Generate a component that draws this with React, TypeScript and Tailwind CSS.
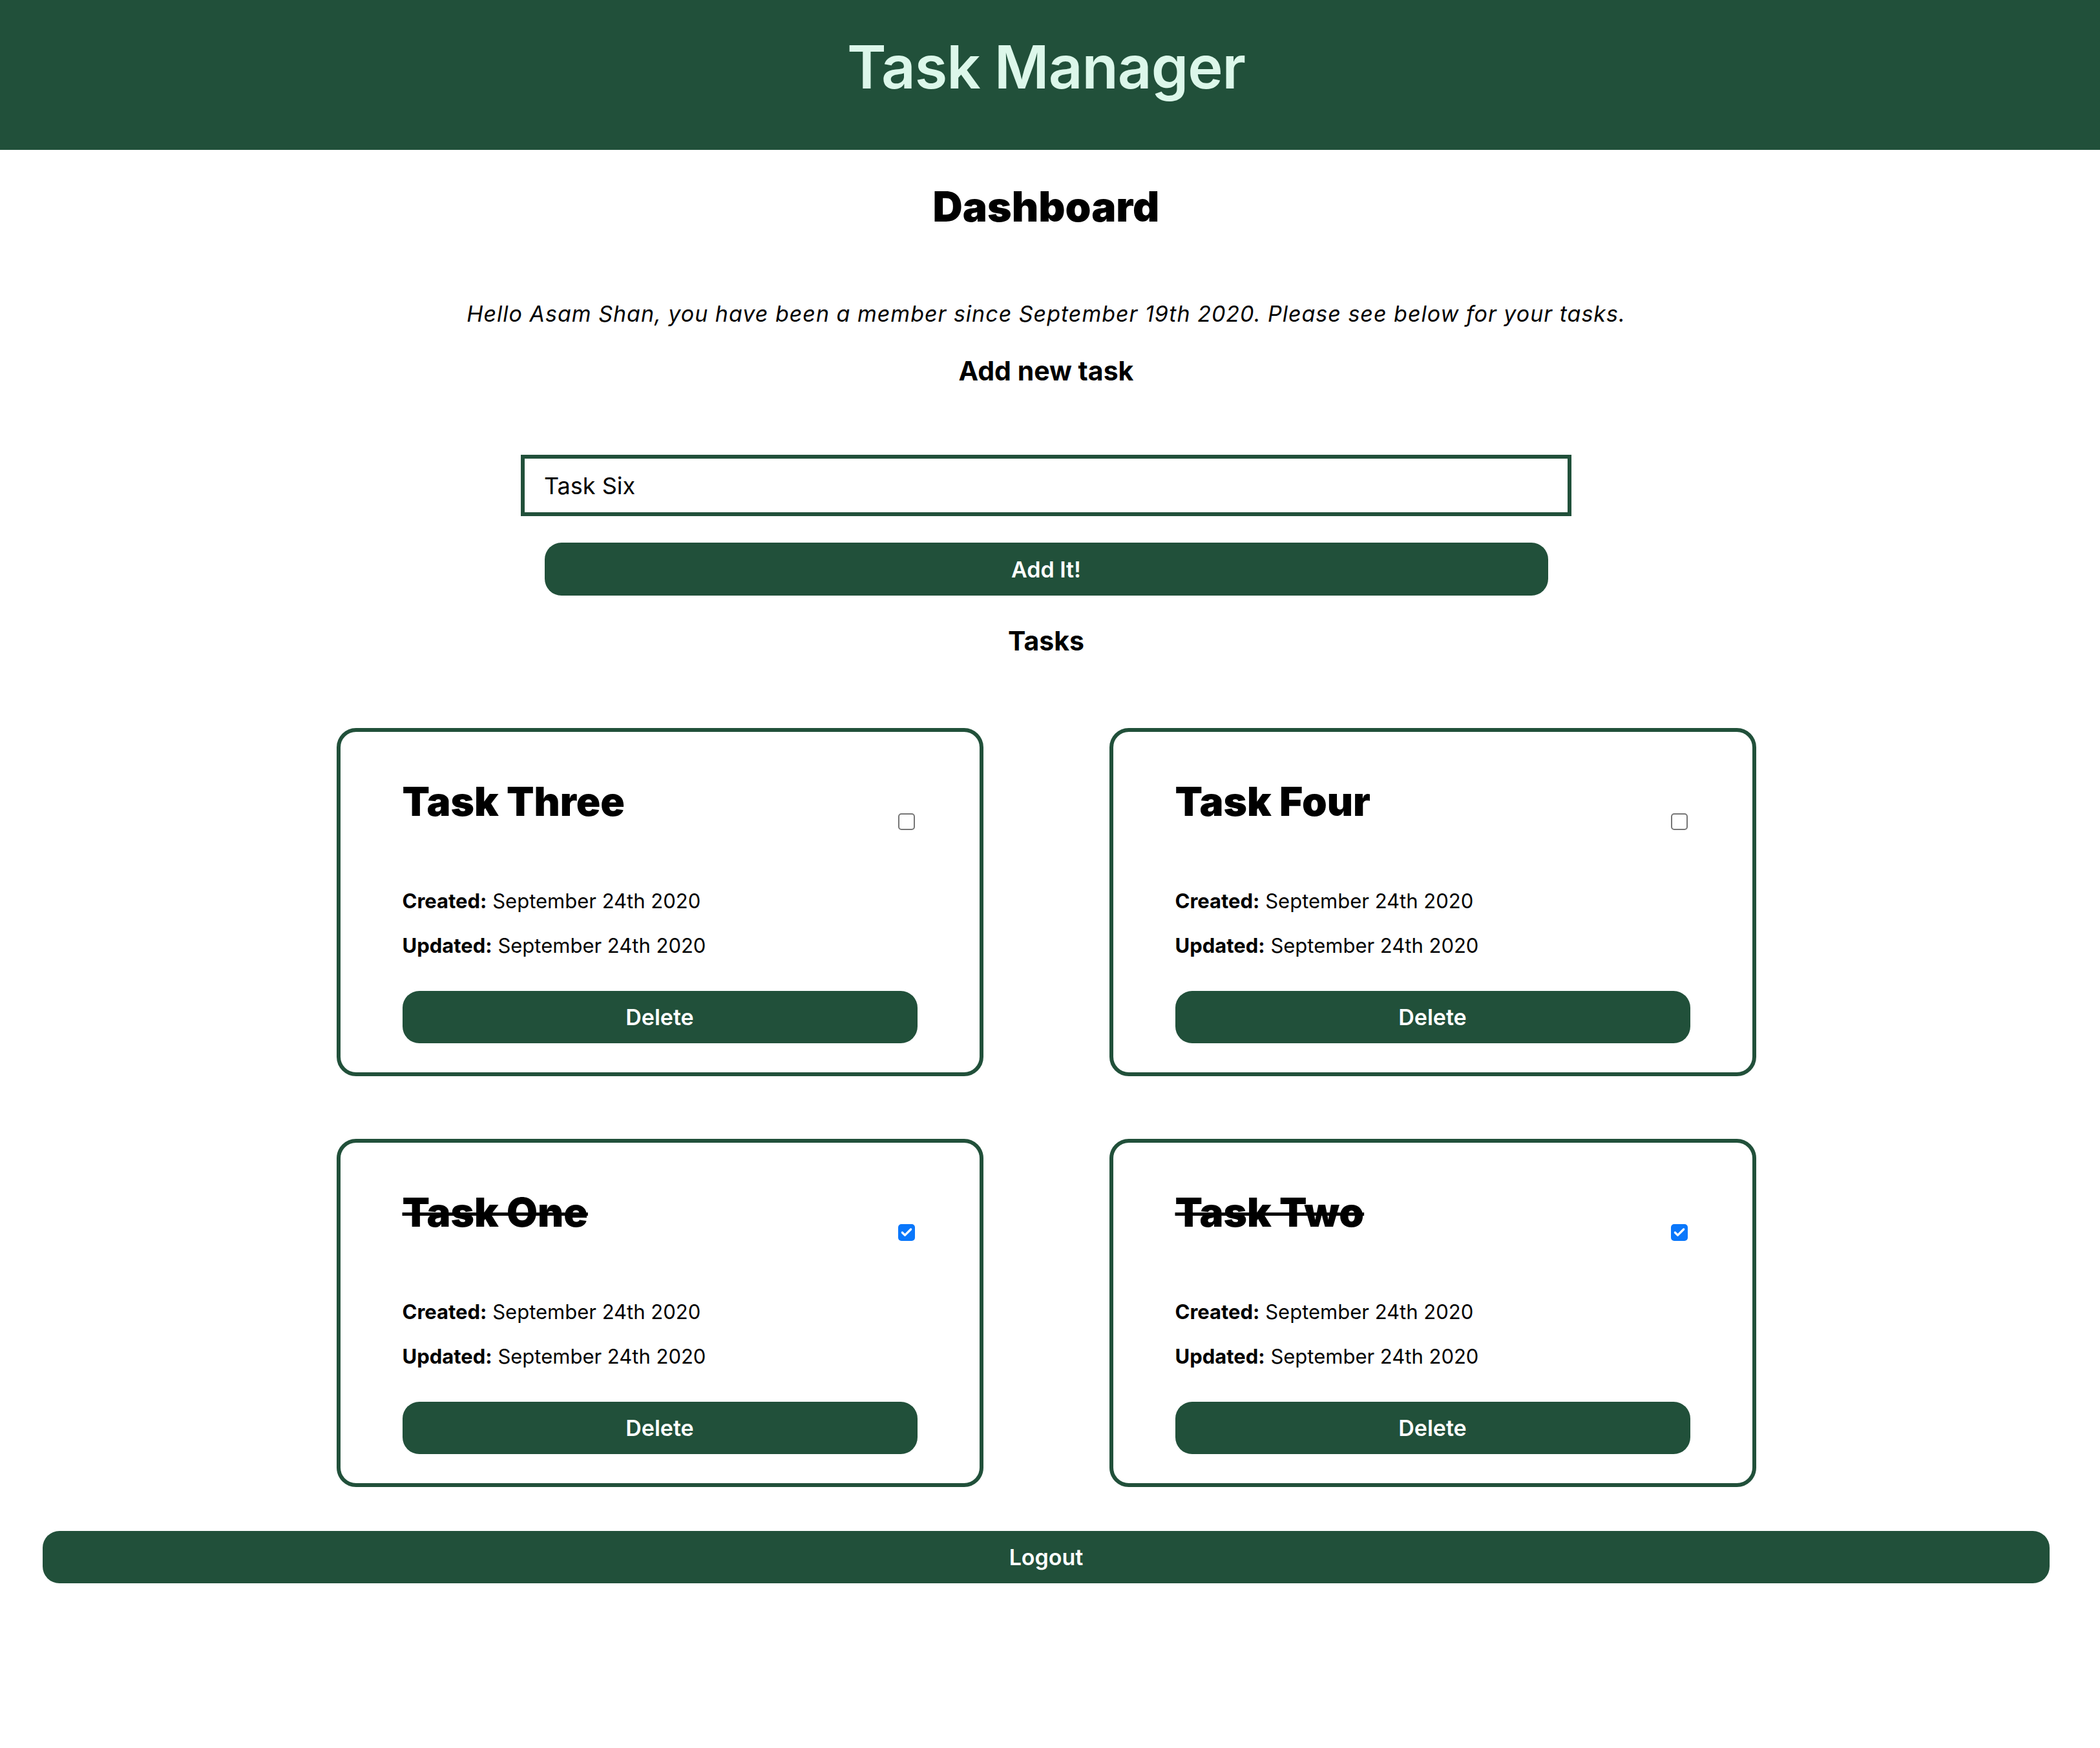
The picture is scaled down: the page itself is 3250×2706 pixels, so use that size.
import { Check } from "lucide-react";

interface Task {
  title: string;
  done: boolean;
  created: string;
  updated: string;
}

const tasks: Task[] = [
  { title: "Task Three", done: false, created: "September 24th 2020", updated: "September 24th 2020" },
  { title: "Task Four", done: false, created: "September 24th 2020", updated: "September 24th 2020" },
  { title: "Task One", done: true, created: "September 24th 2020", updated: "September 24th 2020" },
  { title: "Task Two", done: true, created: "September 24th 2020", updated: "September 24th 2020" },
];

// native-looking checkbox, drawn so the size is exact
const Box = ({ checked }: { checked: boolean }) =>
  checked ? (
    <div className="w-[26px] h-[26px] rounded-[5px] bg-[#0a77fb] flex items-center justify-center">
      <Check size={20} strokeWidth={4} color="#ffffff" />
    </div>
  ) : (
    <div className="w-[26px] h-[26px] rounded-[5px] border-[2px] border-[#767676] bg-white" />
  );

const TaskCard = ({ task }: { task: Task }) => (
  <div className="w-[1001px] h-[539px] border-[6px] border-[#21503a] rounded-[30px] px-[96px] pt-[71px] pb-[45px] flex flex-col">
    {/* titulo + checkbox */}
    <div className="flex justify-between items-start">
      <h2
        className={
          "text-[62px] leading-[74px] font-black text-black" +
          (task.done ? " line-through decoration-[5px]" : "")
        }
      >
        {task.title}
      </h2>
      <div className="mt-[55px] mr-[4px]">
        <Box checked={task.done} />
      </div>
    </div>

    <p className="mt-[90px] text-[31px] leading-[40px] text-black">
      <span className="font-bold">Created:</span> {task.created}
    </p>
    <p className="mt-[29px] text-[31px] leading-[40px] text-black">
      <span className="font-bold">Updated:</span> {task.updated}
    </p>

    <button className="mt-[50px] h-[82px] w-full rounded-[26px] bg-[#21503a] text-white text-[34px] font-semibold">
      Delete
    </button>
  </div>
);

export default function App() {
  return (
    <div className="min-h-[2706px] bg-white font-['Inter','Liberation_Sans',sans-serif]">
      {/* Header */}
      <header className="h-[232px] w-full bg-[#21503a]">
        <div className="w-[3238px] h-full flex items-center justify-center pb-[24px]">
          <h1 className="text-[92px] leading-[110px] font-semibold tracking-[-1px] text-[#dcf7ea]">
            Task Manager
          </h1>
        </div>
      </header>

      <main className="w-[3238px] flex flex-col items-center">
        <h2 className="mt-[50px] text-[64px] leading-[76px] font-black text-black">
          Dashboard
        </h2>

        <p className="mt-[108px] text-[34px] leading-[40px] italic tracking-[1px] text-black">
          Hello Asam Shan, you have been a member since September 19th 2020. Please see below for your tasks.
        </p>

        <h3 className="mt-[44px] text-[41px] leading-[48px] font-bold text-black">Add new task</h3>

        <input
          defaultValue="Task Six"
          className="mt-[106px] w-[1626px] h-[95px] border-[6px] border-[#21503a] px-[30px] text-[36px] text-black outline-none"
        />

        <button className="mt-[41px] w-[1553px] h-[82px] rounded-[26px] bg-[#21503a] text-white text-[34px] font-semibold">
          Add It!
        </button>

        <h3 className="mt-[46px] text-[41px] leading-[48px] font-bold text-black">Tasks</h3>

        {/* grid de tarefas */}
        <div className="mt-[111px] grid grid-cols-2 gap-x-[195px] gap-y-[97px]">
          {tasks.map((t) => (
            <TaskCard key={t.title} task={t} />
          ))}
        </div>

        <button className="mt-[68px] w-[3106px] h-[81px] rounded-[26px] bg-[#21503a] text-white text-[34px] font-semibold">
          Logout
        </button>
      </main>
    </div>
  );
}
